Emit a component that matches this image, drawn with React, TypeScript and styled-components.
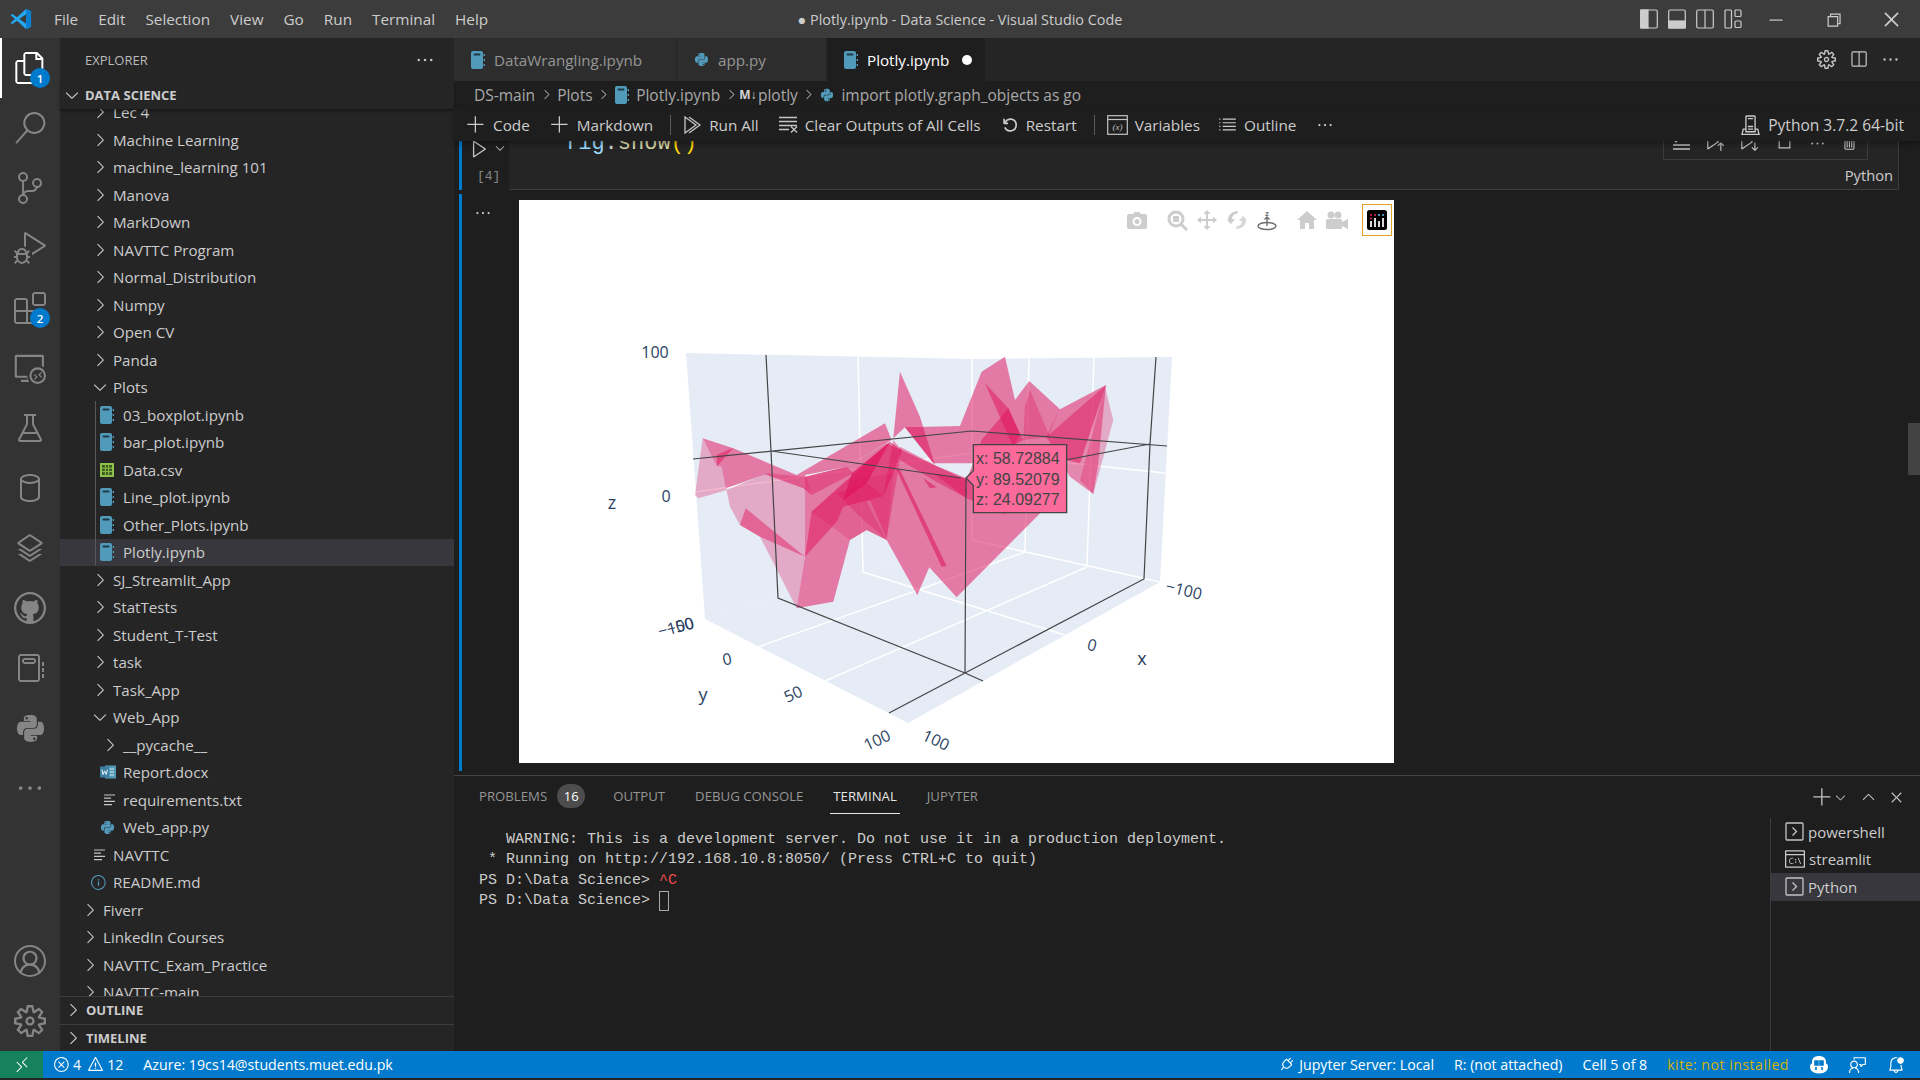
import React from "react";
import styled, { createGlobalStyle } from "styled-components";
import {
  VscAccount,
  VscAdd,
  VscBeaker,
  VscBellDot,
  VscChevronDown,
  VscChevronRight,
  VscChevronUp,
  VscChromeClose,
  VscChromeMaximize,
  VscChromeMinimize,
  VscChromeRestore,
  VscClose,
  VscDatabase,
  VscDebugAlt,
  VscDebugRestart,
  VscEllipsis,
  VscError,
  VscExtensions,
  VscFeedback,
  VscFiles,
  VscGithub,
  VscInfo,
  VscLayers,
  VscListUnordered,
  VscNotebook,
  VscPlay,
  VscPlug,
  VscRemote,
  VscRemoteExplorer,
  VscRunAbove,
  VscRunBelow,
  VscSearch,
  VscServerEnvironment,
  VscSettingsGear,
  VscSourceControl,
  VscSplitHorizontal,
  VscTerminalCmd,
  VscTrash,
  VscWarning,
} from "react-icons/vsc";
import { FaPython } from "react-icons/fa";

const UI_FONT = `"Open Sans", "Noto Sans", sans-serif`;
const MONO_FONT = `"Liberation Mono", monospace`;

const GlobalStyle = createGlobalStyle`
  html, body { margin: 0; padding: 0; background: #1e1e1e; }
  body { font-family: ${UI_FONT}; color: #cccccc; }
  * { box-sizing: border-box; }
`;

const Root = styled.div`
  width: 1920px;
  height: 1080px;
  display: flex;
  flex-direction: column;
  overflow: hidden;
  background: #252526;
`;

/* title bar */
const TitleBar = styled.header`
  height: 38px;
  flex: none;
  background: #3c3c3c;
  display: grid;
  grid-template-columns: 1fr auto 1fr;
  align-items: center;
  font-size: 15.3px;
`;
const MenuArea = styled.div`
  display: flex;
  align-items: center;
  padding-left: 10px;
`;
const MenuItems = styled.nav`
  display: flex;
  gap: 20px;
  margin-left: 22px;
  color: #cccccc;
`;
const WindowTitle = styled.div`
  color: #cccccc;
  font-size: 14.4px;
`;
const WindowControls = styled.div`
  display: flex;
  align-items: center;
  justify-content: flex-end;
  color: #cccccc;
`;
const LayoutButtons = styled.div`
  display: flex;
  gap: 10px;
  margin-right: 4px;
`;
const WinButton = styled.div`
  width: 58px;
  display: flex;
  justify-content: center;
`;

/* main layout */
const Main = styled.div`
  flex: 1;
  display: flex;
  min-height: 0;
`;
const ActivityBar = styled.aside`
  width: 60px;
  flex: none;
  background: #333333;
  display: flex;
  flex-direction: column;
`;
const ActivitySpacer = styled.div`
  flex: 1;
`;
const ActivityItem = styled.div<{ $active?: boolean }>`
  position: relative;
  height: 60px;
  flex: none;
  display: flex;
  align-items: center;
  justify-content: center;
  color: ${(p) => (p.$active ? "#ffffff" : "#858585")};
  border-left: 2px solid ${(p) => (p.$active ? "#ffffff" : "transparent")};
  padding-right: 2px;
`;
const ActivityBadge = styled.span`
  position: absolute;
  left: 28px;
  top: 30px;
  width: 20px;
  height: 20px;
  border-radius: 50%;
  background: #007acc;
  color: #ffffff;
  font-size: 11.5px;
  font-weight: 600;
  display: flex;
  align-items: center;
  justify-content: center;
`;

/* sidebar */
const Sidebar = styled.aside`
  width: 394px;
  flex: none;
  background: #252526;
  display: flex;
  flex-direction: column;
  min-height: 0;
`;
const ExplorerHeader = styled.div`
  height: 44px;
  flex: none;
  padding: 0 19px 0 25px;
  display: flex;
  align-items: center;
  justify-content: space-between;
  font-size: 13px;
  color: #bbbbbb;
`;
const SectionHeader = styled.div<{ $divider?: boolean }>`
  height: ${(p) => (p.$divider ? "27.5px" : "27px")};
  flex: none;
  display: flex;
  align-items: center;
  padding: ${(p) => (p.$divider ? "0 0 0 3px" : "0 0 2px 2px")};
  gap: 3px;
  font-size: 13px;
  font-weight: 700;
  color: #cccccc;
  border-top: ${(p) => (p.$divider ? "1px solid #3c3c3c" : "none")};
  box-shadow: ${(p) => (p.$divider ? "none" : "0 2px 3px #00000066")};
  position: relative;
  z-index: 1;
`;
const Tree = styled.div`
  flex: 1;
  min-height: 0;
  overflow: hidden;
`;
const TreeScroll = styled.div`
  margin-top: -10.5px;
`;
const TreeRow = styled.div<{ $depth: number; $selected?: boolean; $guide?: boolean }>`
  position: relative;
  height: 27.5px;
  display: flex;
  align-items: center;
  padding-left: ${(p) => 20 + p.$depth * 10}px;
  font-size: 15.15px;
  color: #cccccc;
  background: ${(p) => (p.$selected ? "#37373d" : "transparent")};
  white-space: nowrap;
  &::before {
    content: "";
    display: ${(p) => (p.$guide ? "block" : "none")};
    position: absolute;
    left: 35px;
    top: 0;
    bottom: 0;
    width: 1px;
    background: #585858;
  }
`;
const TreeIcon = styled.span<{ $file?: boolean }>`
  width: 20px;
  flex: none;
  margin-right: 3px;
  display: flex;
  align-items: center;
  justify-content: ${(p) => (p.$file ? "flex-start" : "center")};
  color: #c5c5c5;
`;

/* editor column */
const EditorColumn = styled.main`
  flex: 1;
  min-width: 0;
  display: flex;
  flex-direction: column;
  background: #1e1e1e;
`;
const TabBar = styled.div`
  height: 43px;
  flex: none;
  display: flex;
  background: #252526;
`;
const Tab = styled.div<{ $active?: boolean; $width: number }>`
  width: ${(p) => p.$width}px;
  display: flex;
  align-items: center;
  gap: 9px;
  padding-left: 17px;
  font-size: 15.2px;
  background: ${(p) => (p.$active ? "#1e1e1e" : "#2d2d2d")};
  color: ${(p) => (p.$active ? "#ffffff" : "#969696")};
  border-right: 1px solid #252526;
`;
const DirtyDot = styled.span`
  width: 10px;
  height: 10px;
  border-radius: 50%;
  background: #ffffff;
  margin-left: 4px;
`;
const TabActions = styled.div`
  margin-left: auto;
  display: flex;
  align-items: center;
  gap: 13px;
  padding-right: 20px;
  color: #c5c5c5;
`;
const Breadcrumbs = styled.div`
  height: 27px;
  flex: none;
  display: flex;
  align-items: center;
  gap: 3.5px;
  padding-left: 20px;
  font-size: 15.5px;
  color: #a9a9a9;
  white-space: nowrap;
`;
const CrumbMark = styled.span`
  font-size: 12px;
  font-weight: 700;
  color: #d4d4d4;
  margin: 0 -2px 0 -3px;
`;
const Toolbar = styled.div`
  height: 33px;
  flex: none;
  display: flex;
  align-items: center;
  padding: 0 16px 0 12px;
  font-size: 15.3px;
  color: #cccccc;
  background: #1e1e1e;
  box-shadow: 0 3px 6px #00000055;
  position: relative;
  z-index: 2;
  white-space: nowrap;
`;
const ToolButton = styled.div<{ $gap?: number; $after?: number }>`
  display: flex;
  align-items: center;
  gap: ${(p) => p.$gap ?? 7}px;
  margin-right: ${(p) => p.$after ?? 20}px;
`;
const ToolDivider = styled.span<{ $after?: number }>`
  width: 1px;
  height: 20px;
  background: #5a5a5a;
  margin: 0 ${(p) => p.$after ?? 15}px 0 -3px;
`;
const KernelPicker = styled.div`
  margin-left: auto;
  display: flex;
  align-items: center;
  gap: 7px;
  font-size: 15.55px;
`;

/* notebook */
const Notebook = styled.section`
  flex: 1;
  min-height: 0;
  position: relative;
  overflow: hidden;
  padding-left: 5px;
`;
const CellRow = styled.div`
  display: flex;
  height: 49px;
`;
const CellGutter = styled.div`
  width: 50px;
  flex: none;
  border-left: 3px solid #007acc;
  display: flex;
  flex-direction: column;
  color: #c5c5c5;
`;
const RunRow = styled.div`
  display: flex;
  align-items: center;
  gap: 3px;
  height: 14px;
  padding-left: 7px;
`;
const ExecCount = styled.div`
  margin-top: 14px;
  padding-left: 15px;
  font: 13px ${MONO_FONT};
  color: #858585;
`;
const CellEditor = styled.div`
  position: relative;
  flex: 1;
  margin-right: 21px;
  background: #252526;
  border-right: 1px solid #3c3c3c;
  border-bottom: 1px solid #3c3c3c;
  overflow: hidden;
  display: flex;
  flex-direction: column;
`;
const CodeLine = styled.code`
  display: block;
  margin-top: -12.5px;
  padding-left: 56px;
  height: 30px;
  font: 22px/30px ${MONO_FONT};
  color: #d4d4d4;
`;
const CodeToken = styled.span<{ $color: string }>`
  color: ${(p) => p.$color};
`;
const CellLang = styled.div`
  margin-top: auto;
  align-self: flex-end;
  padding: 0 5px 4px 0;
  font-size: 14.7px;
  color: #cccccc;
`;
const CellFloatBar = styled.div`
  position: absolute;
  top: 0;
  right: 30px;
  width: 205px;
  height: 19px;
  border: 1px solid #3c3c3c;
  border-top: none;
  background: #252526;
  display: flex;
  align-items: flex-end;
  justify-content: space-around;
  overflow: hidden;
  color: #c5c5c5;
  padding-bottom: 7px;
`;
const OutputRow = styled.div`
  display: flex;
  height: 577px;
  margin-top: 4px;
`;
const OutputGutter = styled.div`
  width: 60px;
  flex: none;
  border-left: 3px solid #007acc;
  padding: 10px 0 0 12px;
  color: #c5c5c5;
`;
const OutputFrame = styled.div`
  position: relative;
  width: 875px;
  height: 563px;
  margin-top: 6px;
  background: #ffffff;
`;
const PlotSvg = styled.svg`
  display: block;
  width: 875px;
  height: 563px;
`;
const ModeBar = styled.div`
  position: absolute;
  top: 4px;
  right: 2px;
  display: flex;
  gap: 10px;
`;
const ModeGroup = styled.div`
  display: flex;
`;
const ModeBtn = styled.div<{ $strong?: boolean }>`
  width: 30px;
  height: 32px;
  display: flex;
  align-items: center;
  justify-content: center;
  color: ${(p) => (p.$strong ? "#6e6e6e" : "#cdcdcd")};
`;
const LogoBtn = styled(ModeBtn)`
  border: 1px solid #e0a020;
`;
const ScrollThumb = styled.div`
  position: absolute;
  right: 0;
  top: 282px;
  width: 12px;
  height: 52px;
  background: #434343;
`;

/* panel */
const Panel = styled.section`
  height: 276px;
  flex: none;
  border-top: 1px solid #444444;
  background: #1e1e1e;
  display: flex;
  flex-direction: column;
`;
const PanelHeader = styled.div`
  height: 42px;
  flex: none;
  display: flex;
  align-items: stretch;
  justify-content: space-between;
  padding: 0 14px 0 25px;
`;
const PanelTabs = styled.div`
  display: flex;
  gap: 30px;
  font-size: 13.2px;
  color: #969696;
`;
const PanelTab = styled.div<{ $active?: boolean; $pull?: number }>`
  display: flex;
  align-items: center;
  gap: 10px;
  height: 38px;
  padding: 2px ${(p) => (p.$active ? "3px" : "0")} 0;
  margin-left: ${(p) => (p.$active ? "-3px" : "0")};
  margin-right: ${(p) => (p.$active ? "-3px" : `${p.$pull ?? 0}px`)};
  color: ${(p) => (p.$active ? "#e7e7e7" : "#969696")};
  border-bottom: 1px solid ${(p) => (p.$active ? "#e7e7e7" : "transparent")};
`;
const CountBadge = styled.span`
  width: 28px;
  height: 24px;
  border-radius: 12px;
  background: #4d4d4d;
  color: #ffffff;
  display: flex;
  align-items: center;
  justify-content: center;
  font-size: 13px;
`;
const PanelActions = styled.div`
  display: flex;
  align-items: center;
  height: 42px;
  color: #c5c5c5;
`;
const PanelAction = styled.span<{ $left?: number }>`
  display: flex;
  margin-left: ${(p) => p.$left ?? 0}px;
`;
const PanelBody = styled.div`
  flex: 1;
  min-height: 0;
  display: flex;
`;
const Terminal = styled.pre`
  flex: 1;
  margin: 0;
  padding: 12px 0 0 25px;
  font: 15px/20.3px ${MONO_FONT};
  color: #cccccc;
`;
const TermError = styled.span`
  color: #f14c4c;
`;
const TermCursor = styled.span`
  display: inline-block;
  width: 10px;
  height: 20px;
  border: 1px solid #a8a8a8;
  vertical-align: top;
`;
const TermList = styled.div`
  width: 150px;
  flex: none;
  border-left: 1px solid #3c3c3c;
`;
const TermRow = styled.div<{ $selected?: boolean }>`
  height: 27.5px;
  display: flex;
  align-items: center;
  gap: 4px;
  padding-left: 14px;
  font-size: 15px;
  color: #cccccc;
  background: ${(p) => (p.$selected ? "#37373d" : "transparent")};
`;

/* status bar */
const StatusBar = styled.footer`
  height: 27px;
  flex: none;
  background: #007acc;
  color: #ffffff;
  display: flex;
  align-items: center;
  font-size: 14.2px;
  white-space: nowrap;
`;
const RemoteButton = styled.div`
  width: 43px;
  height: 100%;
  background: #16825d;
  display: flex;
  align-items: center;
  justify-content: center;
`;
const StatusItem = styled.div<{ $left?: number; $color?: string; $wide?: boolean }>`
  display: flex;
  align-items: center;
  gap: 3px;
  margin-left: ${(p) => p.$left ?? 0}px;
  color: ${(p) => p.$color ?? "#ffffff"};
  letter-spacing: ${(p) => (p.$wide ? "0.45px" : "normal")};
`;
const StatusRight = styled.div`
  margin-left: auto;
  display: flex;
  align-items: center;
  padding-right: 15px;
`;
const TiltedPlug = styled.span`
  display: flex;
  transform: rotate(45deg);
  margin-right: 1px;
`;
const BottomEdge = styled.div`
  height: 2px;
  flex: none;
  background: #252526;
`;

/* small drawn icons */
const NotebookIcon = () => (
  <svg width="14" height="18" viewBox="0 0 14 18">
    <rect x="0" y="0" width="12" height="18" rx="2" fill="#519aba" />
    <rect x="2.5" y="2.5" width="7" height="2" rx="1" fill="#1e3a48" />
    <rect x="12.6" y="3" width="1.4" height="2" fill="#519aba" />
    <rect x="12.6" y="8" width="1.4" height="2" fill="#519aba" />
    <rect x="12.6" y="13" width="1.4" height="2" fill="#519aba" />
  </svg>
);
const CsvIcon = () => (
  <svg width="14" height="14" viewBox="0 0 14 14">
    <rect width="14" height="14" fill="#8dc149" />
    <rect x="2" y="2" width="10" height="10" fill="#3d5a1f" />
    <path d="M5.4 2v10M8.6 2v10M2 5.2h10M2 8.6h10" stroke="#8dc149" strokeWidth="1" />
  </svg>
);
const WordIcon = () => (
  <svg width="16" height="16" viewBox="0 0 16 16">
    <rect x="5" y="1.5" width="11" height="13" fill="#519aba" />
    <path d="M8 5h6M8 8h6M8 11h6" stroke="#d8e8ef" strokeWidth="1" />
    <rect x="0" y="2.5" width="9.5" height="11" fill="#3b7fa3" />
    <path d="M1.8 5.5l1.2 5 1.6-3.6 1.6 3.6 1.2-5" stroke="#fff" strokeWidth="0.9" fill="none" />
  </svg>
);
const TextIcon = () => (
  <svg width="12" height="12" viewBox="0 0 12 12">
    <path d="M0 1h11M0 4.2h7M0 7.4h11M0 10.6h8" stroke="#c5c5c5" strokeWidth="1.2" />
  </svg>
);
const ShellIcon = () => (
  <svg width="19" height="19" viewBox="0 0 19 19" fill="none" stroke="#c5c5c5">
    <rect x="1" y="1" width="17" height="17" rx="1" strokeWidth="1.3" />
    <path d="M7.5 5.5l4 4-4 4" strokeWidth="1.3" />
  </svg>
);
const LayoutIcon = ({ kind }: { kind: "left" | "bottom" | "right" | "custom" }) => (
  <svg width="18" height="20" viewBox="0 0 18 20" fill="none" stroke="#cccccc" strokeWidth="1.2">
    {kind === "custom" ? (
      <>
        <rect x="1" y="1" width="6.5" height="18" rx="1" />
        <rect x="11" y="1" width="6" height="6.5" rx="1" />
        <rect x="11" y="12" width="6" height="6.5" rx="1" />
      </>
    ) : (
      <>
        <rect x="0.7" y="1" width="16.6" height="18" rx="1.5" />
        {kind === "left" && <rect x="0.7" y="1" width="7.3" height="18" fill="#cccccc" />}
        {kind === "bottom" && <rect x="0.7" y="12" width="16.6" height="7" fill="#cccccc" />}
        {kind === "right" && <path d="M9 1v18" />}
      </>
    )}
  </svg>
);
const VsCodeLogo = () => (
  <svg width="22" height="22" viewBox="0 0 24 24">
    <path d="M17.5 1L23 3.6v16.8L17.5 23 7.6 13.8l-4.9 3.7L0.5 16.3 5.4 12 0.5 7.7l2.2-1.2 4.9 3.7z" fill="#23a9f2" />
    <path d="M17.5 6.8L10.2 12l7.3 5.2z" fill="#3c3c3c" />
    <path d="M17.5 1L23 3.6v16.8L17.5 23z" fill="#0b7fd0" />
  </svg>
);
const RobotIcon = () => (
  <svg width="20" height="20" viewBox="0 0 20 20">
    <path
      d="M10 1c4 0 7 2 7 6v1.500c1.500.5 2 1.500 2 3.500 0 3-3 6.500-9 6.500s-9-3.500-9-6.500c0-2 .5-3 2-3.500V7c0-4 3-6 7-6z"
      fill="#fff"
    />
    <path d="M6 6h3v4H6zM11 6h3v4h-3zM7 12v3M13 12v3" stroke="#007acc" strokeWidth="1.6" fill="#007acc" />
  </svg>
);
const VariablesIcon = () => (
  <svg width="21" height="20" viewBox="0 0 21 20" fill="none">
    <rect x="0.7" y="0.7" width="19.6" height="18.6" stroke="#c5c5c5" strokeWidth="1.2" />
    <path d="M1 4.500h19" stroke="#c5c5c5" strokeWidth="1.2" />
    <text x="10.5" y="15" fontSize="9" fontStyle="italic" fontFamily="Liberation Serif, serif" textAnchor="middle" fill="#c5c5c5">
      (x)
    </text>
  </svg>
);
const RunAllIcon = () => (
  <svg width="18" height="20" viewBox="0 0 18 20" fill="none" stroke="#c5c5c5" strokeWidth="1.3">
    <path d="M1 2l11 8-11 8z" />
    <path d="M5 2l11 8-11 8" />
  </svg>
);
const ClearAllIcon = () => (
  <svg width="19" height="17" viewBox="0 0 19 17" fill="none" stroke="#c5c5c5" strokeWidth="1.3">
    <path d="M0 1.500h18M0 5.500h18M0 9.500h18M0 13.500h10M12 10.500l6 6M18 10.500l-6 6" />
  </svg>
);
const CheckListIcon = () => (
  <svg width="19" height="16" viewBox="0 0 19 16" fill="none" stroke="#c5c5c5" strokeWidth="1.3">
    <path d="M1 3l3 3 4-5M10 4h8M1 9h17M1 13h17" />
  </svg>
);

/* plotly mode bar icons */
const CameraGlyph = () => (
  <svg width="20" height="18" viewBox="0 0 20 18" fill="currentColor">
    <path d="M2 3h4l1.500-2h5L14 3h4a2 2 0 0 1 2 2v11a2 2 0 0 1-2 2H2a2 2 0 0 1-2-2V5a2 2 0 0 1 2-2zm8 3a4.500 4.500 0 1 0 0 9 4.500 4.500 0 0 0 0-9zm0 2a2.500 2.500 0 1 1 0 5 2.500 2.500 0 0 1 0-5z" fillRule="evenodd" />
  </svg>
);
const ZoomGlyph = () => (
  <svg width="21" height="21" viewBox="0 0 21 21" fill="none" stroke="currentColor">
    <circle cx="9" cy="9" r="7" strokeWidth="3" />
    <rect x="6" y="6" width="6" height="6" fill="currentColor" strokeWidth="0" />
    <path d="M14 14l6 6" strokeWidth="3" />
  </svg>
);
const PanGlyph = () => (
  <svg width="20" height="20" viewBox="0 0 20 20" fill="currentColor">
    <path d="M10 0l3.500 4H11v5h5V6.500l4 3.500-4 3.500V11h-5v5h2.500L10 20l-3.500-4H9v-5H4v2.500L0 10l4-3.500V9h5V4H6.500z" />
  </svg>
);
const OrbitGlyph = () => (
  <svg width="20" height="20" viewBox="0 0 20 20" fill="currentColor">
    <path d="M1 10C1 5 5 1 11 1l-1 3c-3 0-5 2-5 5h3l-4 5-4-4z" />
    <path d="M19 10c0 5-4 9-10 9l1-3c3 0 5-2 5-5h-3l4-5 4 4z" opacity="0.8" />
  </svg>
);
const TurntableGlyph = () => (
  <svg width="20" height="22" viewBox="0 0 20 22" fill="none" stroke="currentColor" strokeWidth="1.400">
    <text x="10" y="6.500" fontSize="8" fontWeight="700" textAnchor="middle" fill="currentColor" stroke="none" fontFamily="Liberation Sans, sans-serif">
      z
    </text>
    <path d="M10 8v9M7.500 10.500L10 8l2.500 2.500" />
    <ellipse cx="10" cy="17" rx="9" ry="3.500" />
  </svg>
);
const HomeGlyph = () => (
  <svg width="20" height="18" viewBox="0 0 20 18" fill="currentColor">
    <path d="M10 0l10 9h-3v9h-5v-6H8v6H3V9H0z" />
  </svg>
);
const VideoGlyph = () => (
  <svg width="22" height="18" viewBox="0 0 22 18" fill="currentColor">
    <circle cx="5" cy="4" r="3.500" />
    <circle cx="12" cy="4" r="3.500" />
    <rect x="0" y="8" width="16" height="10" rx="1.500" />
    <path d="M16 11l6-3v10l-6-3z" />
  </svg>
);
const PlotlyGlyph = () => (
  <svg width="20" height="20" viewBox="0 0 20 20">
    <rect width="20" height="20" rx="2.500" fill="#000" />
    {[4, 8, 12, 16].map((x, i) => (
      <circle key={x} cx={x} cy="5" r="1" fill={i < 2 ? "#ef1e6a" : "#56c8e8"} />
    ))}
    <circle cx="4" cy="8.500" r="1" fill="#ef1e6a" />
    <path d="M4 11v6M8 8v9M12 11v6M16 8v9" stroke="#fff" strokeWidth="1.700" />
  </svg>
);

type TreeEntry = {
  label: string;
  depth: number;
  kind: "closed" | "open" | "nb" | "csv" | "word" | "text" | "py" | "info";
  selected?: boolean;
  guide?: boolean;
};

const treeEntries: TreeEntry[] = [
  { label: "Lec 4", depth: 1, kind: "closed" },
  { label: "Machine Learning", depth: 1, kind: "closed" },
  { label: "machine_learning 101", depth: 1, kind: "closed" },
  { label: "Manova", depth: 1, kind: "closed" },
  { label: "MarkDown", depth: 1, kind: "closed" },
  { label: "NAVTTC Program", depth: 1, kind: "closed" },
  { label: "Normal_Distribution", depth: 1, kind: "closed" },
  { label: "Numpy", depth: 1, kind: "closed" },
  { label: "Open CV", depth: 1, kind: "closed" },
  { label: "Panda", depth: 1, kind: "closed" },
  { label: "Plots", depth: 1, kind: "open" },
  { label: "03_boxplot.ipynb", depth: 2, kind: "nb", guide: true },
  { label: "bar_plot.ipynb", depth: 2, kind: "nb", guide: true },
  { label: "Data.csv", depth: 2, kind: "csv", guide: true },
  { label: "Line_plot.ipynb", depth: 2, kind: "nb", guide: true },
  { label: "Other_Plots.ipynb", depth: 2, kind: "nb", guide: true },
  { label: "Plotly.ipynb", depth: 2, kind: "nb", guide: true, selected: true },
  { label: "SJ_Streamlit_App", depth: 1, kind: "closed" },
  { label: "StatTests", depth: 1, kind: "closed" },
  { label: "Student_T-Test", depth: 1, kind: "closed" },
  { label: "task", depth: 1, kind: "closed" },
  { label: "Task_App", depth: 1, kind: "closed" },
  { label: "Web_App", depth: 1, kind: "open" },
  { label: "__pycache__", depth: 2, kind: "closed" },
  { label: "Report.docx", depth: 2, kind: "word" },
  { label: "requirements.txt", depth: 2, kind: "text" },
  { label: "Web_app.py", depth: 2, kind: "py" },
  { label: "NAVTTC", depth: 1, kind: "text" },
  { label: "README.md", depth: 1, kind: "info" },
  { label: "Fiverr", depth: 0, kind: "closed" },
  { label: "LinkedIn Courses", depth: 0, kind: "closed" },
  { label: "NAVTTC_Exam_Practice", depth: 0, kind: "closed" },
  { label: "NAVTTC-main", depth: 0, kind: "closed" },
];

function treeIcon(kind: TreeEntry["kind"]) {
  switch (kind) {
    case "closed":
      return <VscChevronRight size={20} />;
    case "open":
      return <VscChevronDown size={20} />;
    case "nb":
      return <NotebookIcon />;
    case "csv":
      return <CsvIcon />;
    case "word":
      return <WordIcon />;
    case "text":
      return <TextIcon />;
    case "py":
      return <FaPython size={15} color="#519aba" />;
    case "info":
      return <VscInfo size={17} color="#519aba" />;
  }
}

// surface patches, in px of a 3x crop starting at (680, 340)
const patches: [string, number][] = [
  ["45,465 68,295 110,378 125,380 140,450 55,475", 0.3],
  ["125,380 150,500 180,555 240,590 350,805 375,650 375,410 260,400 140,450", 0.3],
  ["1035,200 1050,150 1110,290 1030,300", 0.3],
  ["1275,140 1300,240 1240,462 1200,420", 0.3],
  ["68,295 160,325 350,405 395,465 370,445 255,403 138,445 125,380 110,378", 0.52],
  ["350,405 615,250 635,300 500,380 375,405 395,465", 0.52],
  ["660,95 720,230 765,375 675,262 640,295", 0.52],
  ["675,262 840,258 905,95 975,50 1005,180 1048,123 1140,208 1278,135 1200,370 1160,360 1160,400 880,370 760,370", 0.52],
  ["375,410 500,380 620,310 860,420 860,700 830,772 748,682 712,765 620,600 560,570 510,600 460,785 350,805 375,650", 0.52],
  ["860,420 1160,400 1100,500 830,772 860,700", 0.52],
  ["395,515 510,600 560,570 620,600 640,400 500,420", 0.22],
  ["395,515 630,305 665,330 640,400 610,468 490,500", 0.5],
  ["375,650 395,515 490,500 470,545", 0.5],
  ["375,410 500,380 520,400 395,465", 0.38],
  ["660,320 770,378 860,415 860,475 760,420 660,360", 0.45],
  ["640,300 665,330 620,595 570,480 610,468", 0.38],
  ["470,460 560,430 610,468 560,485 620,600 540,530", 0.3],
  ["760,400 860,415 980,525 860,475", 0.45],
  ["915,130 985,205 1020,285 1000,320", 0.5],
  ["905,300 985,205 1030,300 960,340 860,420", 0.5],
  ["1278,135 1255,370 1240,462 1170,410 1100,290", 0.45],
  ["660,390 800,678 785,680 650,390", 0.55],
  ["197,505 375,650 240,590 180,555", 0.45],
  ["110,345 160,323 112,378", 0.5],
  ["730,415 770,442 750,445", 0.55],
  ["515,400 630,305 560,430 490,480", 0.65],
  ["1100,290 1135,215 1100,300", 0.45],
];

const wallLines = [
  "M858 357L863 572",
  "M972 359V540",
  "M1029 358L1025 552",
  "M1094 358L1087 567",
  "M695 492L972 453L1165 473",
  "M758 647L1025 552",
  "M825 681L1087 567",
  "M863 572L1065 635",
  "M972 540L1160 582",
];
const boxLines = [
  "M693 459L972 431L1167 446",
  "M771 451L961 478",
  "M766 355L771 451L778 598L965 673L983 681",
  "M1156 357L1150 444L1144 579L965 673L889 713",
  "M1150 444L1060 461",
  "M966 479L965 673",
];

const AxisLabel = ({ x, y, rot = 0, size = 16, children }: { x: number; y: number; rot?: number; size?: number; children: string }) => (
  <text
    x={x}
    y={y + 1.5}
    fontSize={size}
    fill="#2a3f5f"
    fontFamily='"Open Sans", sans-serif'
    textAnchor="middle"
    dominantBaseline="middle"
    transform={rot ? `rotate(${rot} ${x} ${y})` : undefined}
  >
    {children}
  </text>
);

const Plot = () => (
  <PlotSvg viewBox="519 200 875 563">
    <polygon points="686,353 972,359 972,540 705,619" fill="#e5ecf6" />
    <polygon points="972,359 1172,357 1160,582 972,540" fill="#e5ecf6" />
    <polygon points="705,619 972,540 1160,582 908,723" fill="#e5ecf6" />
    <path d={wallLines.join("")} stroke="#ffffff" strokeWidth="1.5" fill="none" />
    <g transform="translate(680 340) scale(0.3333)">
      {patches.map(([points, alpha]) => (
        <polygon key={points} points={points} fill="#df115a" fillOpacity={alpha} />
      ))}
    </g>
    <path d={boxLines.join("")} stroke="#444444" strokeWidth="1.2" fill="none" />
    <g transform="translate(680 340) scale(0.3333)">
      <polygon
        points="880,314 1160,314 1160,518 880,518 880,436 858,414 880,392"
        fill="#fb6a9a"
        stroke="#444444"
        strokeWidth="4"
      />
    </g>
    <g fontFamily='"Liberation Sans", sans-serif' fontSize="16" fill="#444444">
      <text x="976" y="464">x: 58.72884</text>
      <text x="976" y="485">y: 89.52079</text>
      <text x="976" y="505">z: 24.09277</text>
    </g>
    <AxisLabel x={655} y={352}>100</AxisLabel>
    <AxisLabel x={666} y={496}>0</AxisLabel>
    <AxisLabel x={612} y={503} size={18}>z</AxisLabel>
    <AxisLabel x={1184} y={590} rot={14}>−100</AxisLabel>
    <AxisLabel x={1092} y={645} rot={14}>0</AxisLabel>
    <AxisLabel x={1142} y={659} size={18}>x</AxisLabel>
    <AxisLabel x={936} y={740} rot={25}>100</AxisLabel>
    <AxisLabel x={877} y={740} rot={-25}>100</AxisLabel>
    <AxisLabel x={793} y={694} rot={-25}>50</AxisLabel>
    <AxisLabel x={727} y={659} rot={-10}>0</AxisLabel>
    <AxisLabel x={703} y={695} size={18}>y</AxisLabel>
    <AxisLabel x={676} y={627} rot={-15}>−100</AxisLabel>
    <AxisLabel x={680} y={626} rot={-15}>−50</AxisLabel>
  </PlotSvg>
);

export default function App() {
  return (
    <Root>
      <GlobalStyle />
      <TitleBar>
        <MenuArea>
          <VsCodeLogo />
          <MenuItems>
            {["File", "Edit", "Selection", "View", "Go", "Run", "Terminal", "Help"].map((m) => (
              <span key={m}>{m}</span>
            ))}
          </MenuItems>
        </MenuArea>
        <WindowTitle>● Plotly.ipynb - Data Science - Visual Studio Code</WindowTitle>
        <WindowControls>
          <LayoutButtons>
            <LayoutIcon kind="left" />
            <LayoutIcon kind="bottom" />
            <LayoutIcon kind="right" />
            <LayoutIcon kind="custom" />
          </LayoutButtons>
          <WinButton><VscChromeMinimize size={19} /></WinButton>
          <WinButton><VscChromeRestore size={19} /></WinButton>
          <WinButton><VscChromeClose size={21} /></WinButton>
        </WindowControls>
      </TitleBar>

      <Main>
        <ActivityBar>
          <ActivityItem $active>
            <VscFiles size={32} />
            <ActivityBadge>1</ActivityBadge>
          </ActivityItem>
          <ActivityItem><VscSearch size={32} /></ActivityItem>
          <ActivityItem><VscSourceControl size={32} /></ActivityItem>
          <ActivityItem><VscDebugAlt size={32} /></ActivityItem>
          <ActivityItem>
            <VscExtensions size={32} />
            <ActivityBadge>2</ActivityBadge>
          </ActivityItem>
          <ActivityItem><VscRemoteExplorer size={32} /></ActivityItem>
          <ActivityItem><VscBeaker size={32} /></ActivityItem>
          <ActivityItem><VscDatabase size={32} /></ActivityItem>
          <ActivityItem><VscLayers size={32} /></ActivityItem>
          <ActivityItem><VscGithub size={32} /></ActivityItem>
          <ActivityItem><VscNotebook size={32} /></ActivityItem>
          <ActivityItem><FaPython size={31} /></ActivityItem>
          <ActivityItem><VscEllipsis size={30} /></ActivityItem>
          <ActivitySpacer />
          <ActivityItem><VscAccount size={32} /></ActivityItem>
          <ActivityItem><VscSettingsGear size={32} /></ActivityItem>
        </ActivityBar>

        <Sidebar>
          <ExplorerHeader>
            <span>EXPLORER</span>
            <VscEllipsis size={20} color="#c5c5c5" />
          </ExplorerHeader>
          <SectionHeader>
            <VscChevronDown size={20} />
            DATA SCIENCE
          </SectionHeader>
          <Tree>
            <TreeScroll>
              {treeEntries.map((e) => (
                <TreeRow key={e.label + e.depth} $depth={e.depth} $selected={e.selected} $guide={e.guide}>
                  <TreeIcon $file={["nb", "csv", "word", "py", "info"].includes(e.kind)}>{treeIcon(e.kind)}</TreeIcon>
                  {e.label}
                </TreeRow>
              ))}
            </TreeScroll>
          </Tree>
          <SectionHeader $divider>
            <VscChevronRight size={20} />
            OUTLINE
          </SectionHeader>
          <SectionHeader $divider>
            <VscChevronRight size={20} />
            TIMELINE
          </SectionHeader>
        </Sidebar>

        <EditorColumn>
          <TabBar>
            <Tab $width={223}><NotebookIcon />DataWrangling.ipynb</Tab>
            <Tab $width={150}><FaPython size={15} color="#519aba" />app.py</Tab>
            <Tab $active $width={159}><NotebookIcon />Plotly.ipynb<DirtyDot /></Tab>
            <TabActions>
              <VscSettingsGear size={19} />
              <VscSplitHorizontal size={19} />
              <VscEllipsis size={19} />
            </TabActions>
          </TabBar>
          <Breadcrumbs>
            DS-main <VscChevronRight size={15} /> Plots <VscChevronRight size={15} />
            <NotebookIcon />
            &nbsp;Plotly.ipynb <VscChevronRight size={15} />
            <CrumbMark>M↓</CrumbMark>plotly <VscChevronRight size={15} />
            <FaPython size={14} color="#519aba" />
            &nbsp;import plotly.graph_objects as go
          </Breadcrumbs>
          <Toolbar>
            <ToolButton $after={20}><VscAdd size={20} />Code</ToolButton>
            <ToolButton $after={20}><VscAdd size={20} />Markdown</ToolButton>
            <ToolDivider $after={13} />
            <ToolButton><RunAllIcon />Run All</ToolButton>
            <ToolButton><ClearAllIcon />Clear Outputs of All Cells</ToolButton>
            <ToolButton><VscDebugRestart size={18} />Restart</ToolButton>
            <ToolDivider $after={12} />
            <ToolButton $after={18}><VariablesIcon />Variables</ToolButton>
            <ToolButton><VscListUnordered size={19} />Outline</ToolButton>
            <VscEllipsis size={18} />
            <KernelPicker>
              <VscServerEnvironment size={21} />
              Python 3.7.2 64-bit
            </KernelPicker>
          </Toolbar>

          <Notebook>
            <CellRow>
              <CellGutter>
                <RunRow>
                  <VscPlay size={21} />
                  <VscChevronDown size={14} />
                </RunRow>
                <ExecCount>[4]</ExecCount>
              </CellGutter>
              <CellEditor>
                <CodeLine>
                  <CodeToken $color="#9cdcfe">fig</CodeToken>.<CodeToken $color="#dcdcaa">show</CodeToken>
                  <CodeToken $color="#ffd700">()</CodeToken>
                </CodeLine>
                <CellLang>Python</CellLang>
                <CellFloatBar>
                  <CheckListIcon />
                  <VscRunAbove size={19} />
                  <VscRunBelow size={19} />
                  <VscChromeMaximize size={19} />
                  <VscEllipsis size={17} />
                  <VscTrash size={18} />
                </CellFloatBar>
              </CellEditor>
            </CellRow>
            <OutputRow>
              <OutputGutter><VscEllipsis size={18} /></OutputGutter>
              <OutputFrame>
                <Plot />
                <ModeBar>
                  <ModeGroup>
                    <ModeBtn><CameraGlyph /></ModeBtn>
                  </ModeGroup>
                  <ModeGroup>
                    <ModeBtn><ZoomGlyph /></ModeBtn>
                    <ModeBtn><PanGlyph /></ModeBtn>
                    <ModeBtn><OrbitGlyph /></ModeBtn>
                    <ModeBtn $strong><TurntableGlyph /></ModeBtn>
                  </ModeGroup>
                  <ModeGroup>
                    <ModeBtn><HomeGlyph /></ModeBtn>
                    <ModeBtn><VideoGlyph /></ModeBtn>
                  </ModeGroup>
                  <LogoBtn><PlotlyGlyph /></LogoBtn>
                </ModeBar>
              </OutputFrame>
            </OutputRow>
            <ScrollThumb />
          </Notebook>

          <Panel>
            <PanelHeader>
              <PanelTabs>
                <PanelTab $pull={-2}>PROBLEMS<CountBadge>16</CountBadge></PanelTab>
                <PanelTab>OUTPUT</PanelTab>
                <PanelTab>DEBUG CONSOLE</PanelTab>
                <PanelTab $active>TERMINAL</PanelTab>
                <PanelTab>JUPYTER</PanelTab>
              </PanelTabs>
              <PanelActions>
                <VscAdd size={21} />
                <VscChevronDown size={15} />
                <PanelAction $left={11}><VscChevronUp size={19} /></PanelAction>
                <PanelAction $left={9}><VscClose size={19} /></PanelAction>
              </PanelActions>
            </PanelHeader>
            <PanelBody>
              <Terminal>
                {"   WARNING: This is a development server. Do not use it in a production deployment.\n"}
                {" * Running on http://192.168.10.8:8050/ (Press CTRL+C to quit)\n"}
                {"PS D:\\Data Science> "}
                <TermError>^C</TermError>
                {"\nPS D:\\Data Science> "}
                <TermCursor />
              </Terminal>
              <TermList>
                <TermRow><ShellIcon />powershell</TermRow>
                <TermRow><VscTerminalCmd size={20} />streamlit</TermRow>
                <TermRow $selected><ShellIcon />Python</TermRow>
              </TermList>
            </PanelBody>
          </Panel>
        </EditorColumn>
      </Main>

      <StatusBar>
        <RemoteButton><VscRemote size={18} /></RemoteButton>
        <StatusItem $left={10}><VscError size={17} />4</StatusItem>
        <StatusItem $left={6}><VscWarning size={17} />12</StatusItem>
        <StatusItem $left={20}>Azure: 19cs14@students.muet.edu.pk</StatusItem>
        <StatusRight>
          <StatusItem><TiltedPlug><VscPlug size={17} /></TiltedPlug>Jupyter Server: Local</StatusItem>
          <StatusItem $left={20}>R: (not attached)</StatusItem>
          <StatusItem $left={20}>Cell 5 of 8</StatusItem>
          <StatusItem $left={20} $color="#d4b106" $wide>kite: not installed</StatusItem>
          <StatusItem $left={20}><RobotIcon /></StatusItem>
          <StatusItem $left={20}><VscFeedback size={18} /></StatusItem>
          <StatusItem $left={20}><VscBellDot size={18} /></StatusItem>
        </StatusRight>
      </StatusBar>
      <BottomEdge />
    </Root>
  );
}
